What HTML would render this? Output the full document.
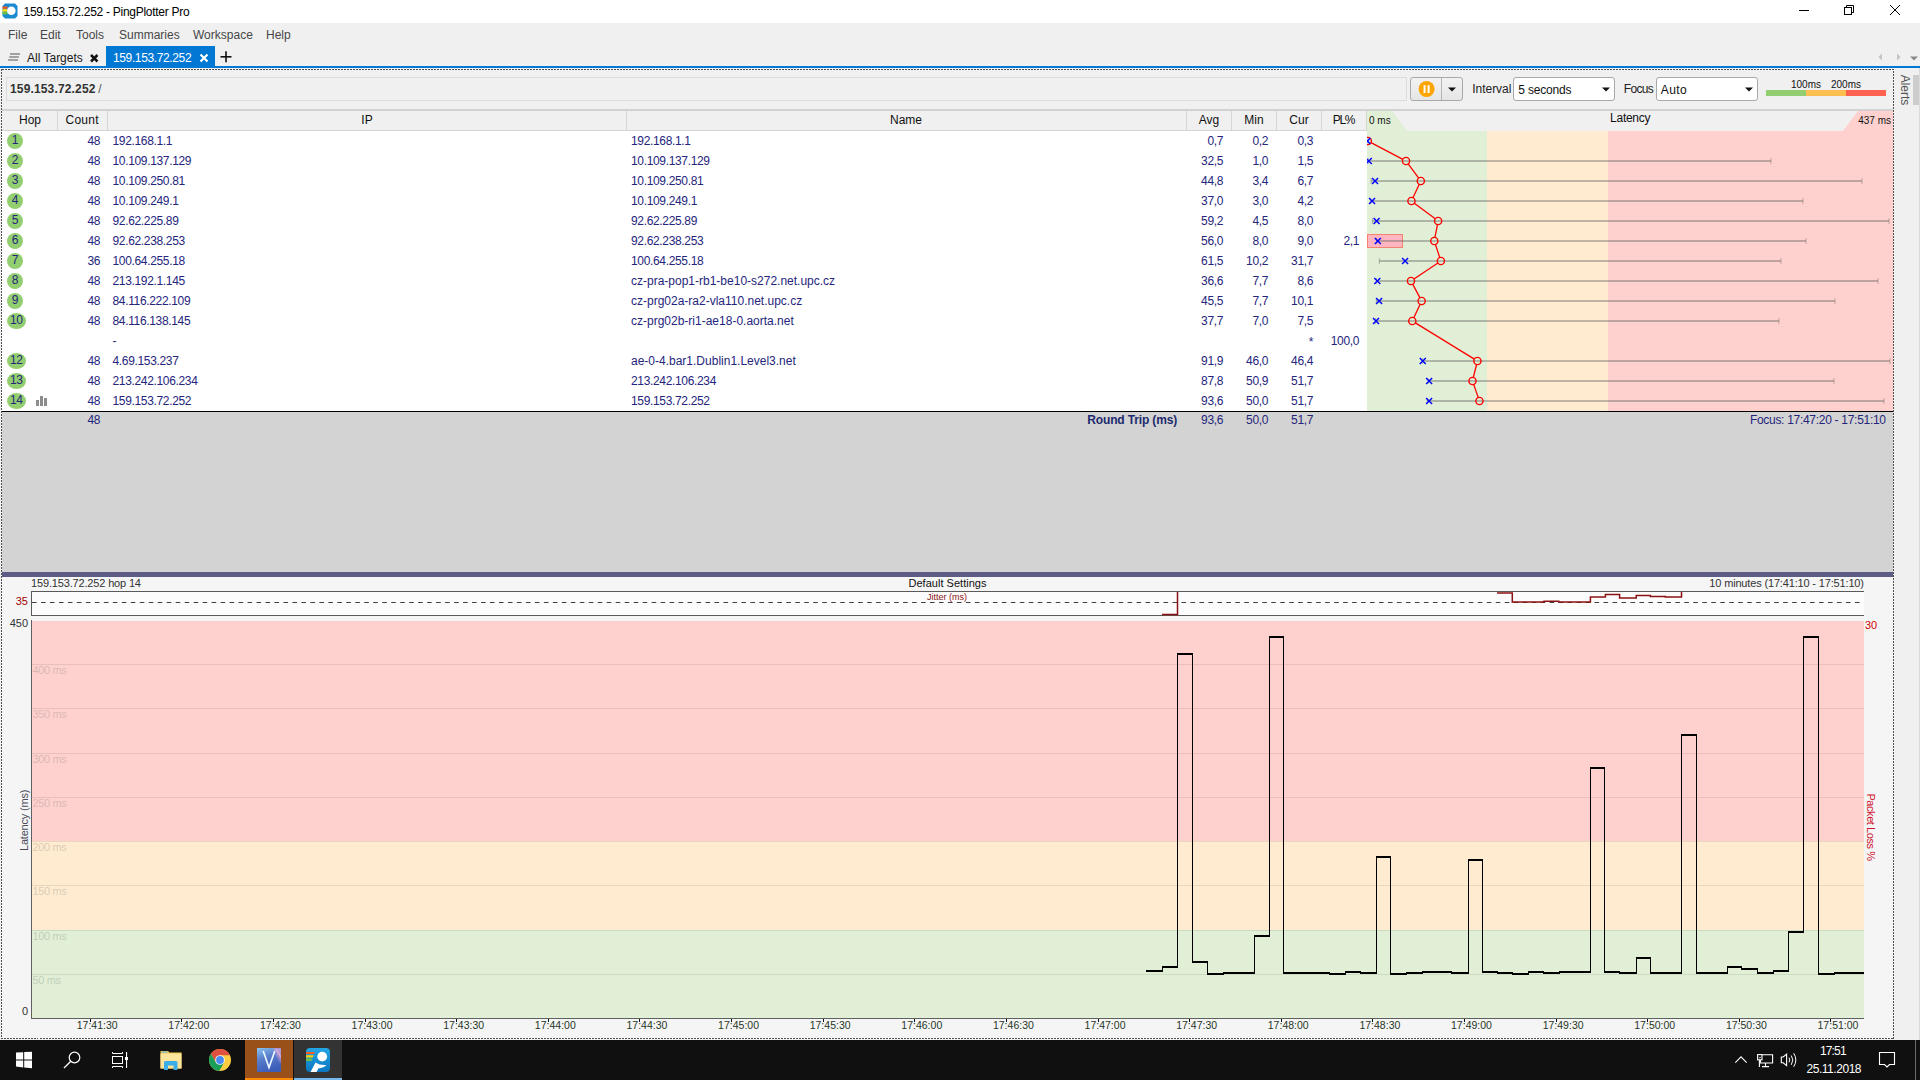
<!DOCTYPE html><html><head><meta charset="utf-8"><style>
html,body{margin:0;padding:0;}
body{width:1920px;height:1080px;overflow:hidden;position:relative;background:#f0f0f0;font-family:"Liberation Sans",sans-serif;}
.t{position:absolute;white-space:nowrap;}
.r{position:absolute;}
svg{position:absolute;}
</style></head><body>
<div class="r" style="left:0px;top:0px;width:1920px;height:23px;background:#ffffff;"></div>
<svg style="left:2px;top:3px" width="16" height="16" viewBox="0 0 16 16">
<path d="M3 0.5H13L15.5 3V13L13 15.5H3L0.5 13V3Z" fill="#1a8bd0"/>
<rect x="0.5" y="3.5" width="5" height="2.2" fill="#ff5a1f"/>
<rect x="0.5" y="6.2" width="4.5" height="2.4" fill="#ffe000"/>
<rect x="0.5" y="9" width="5" height="2.4" fill="#6cc04a"/>
<circle cx="9.3" cy="7.8" r="4.3" fill="#fff"/>
</svg>
<div class="t" style="top:3.50px;height:16px;line-height:16px;font-size:12px;color:#000;letter-spacing:-0.281px;left:23.50px;">159.153.72.252 - PingPlotter Pro</div>
<div class="r" style="left:1799px;top:10px;width:10px;height:1px;background:#000;"></div>
<svg style="left:1840px;top:2px" width="20" height="18" viewBox="0 0 20 18">
<rect x="4.5" y="5.5" width="7" height="7" fill="none" stroke="#000" stroke-width="1"/>
<path d="M6.5 5.5V3.5H13.5V10.5H11.5" fill="none" stroke="#000" stroke-width="1"/>
</svg>
<svg style="left:1885px;top:0px" width="20" height="20" viewBox="0 0 20 20">
<path d="M5 5L15 15M15 5L5 15" stroke="#000" stroke-width="1"/>
</svg>
<div class="r" style="left:0px;top:23px;width:1920px;height:23px;background:#f0f0f0;"></div>
<div class="t" style="top:26.50px;height:16px;line-height:16px;font-size:12px;color:#474747;left:8.00px;">File</div>
<div class="t" style="top:26.50px;height:16px;line-height:16px;font-size:12px;color:#474747;left:40.00px;">Edit</div>
<div class="t" style="top:26.50px;height:16px;line-height:16px;font-size:12px;color:#474747;left:76.00px;">Tools</div>
<div class="t" style="top:26.50px;height:16px;line-height:16px;font-size:12px;color:#474747;left:119.00px;">Summaries</div>
<div class="t" style="top:26.50px;height:16px;line-height:16px;font-size:12px;color:#474747;left:193.00px;">Workspace</div>
<div class="t" style="top:26.50px;height:16px;line-height:16px;font-size:12px;color:#474747;left:266.00px;">Help</div>
<svg style="left:6px;top:50px" width="16" height="14" viewBox="0 0 16 14">
<rect x="4" y="3.3" width="10" height="1.4" fill="#808080"/>
<rect x="3.3" y="6.3" width="9.5" height="1.4" fill="#808080"/>
<rect x="2.1" y="9.3" width="10" height="1.4" fill="#808080"/>
</svg>
<div class="t" style="top:50.00px;height:16px;line-height:16px;font-size:12px;color:#1a1a1a;left:27.00px;">All Targets</div>
<svg style="left:88px;top:52px" width="12" height="12" viewBox="0 0 12 12">
<path d="M3 3L9.5 9.5M9.5 3L3 9.5" stroke="#111" stroke-width="2.5"/>
</svg>
<div class="r" style="left:106px;top:46px;width:109px;height:20px;background:#0078d4;"></div>
<div class="t" style="top:49.50px;height:16px;line-height:16px;font-size:12px;color:#ffffff;letter-spacing:-0.372px;left:113.00px;">159.153.72.252</div>
<svg style="left:197.5px;top:52px" width="12" height="12" viewBox="0 0 12 12">
<path d="M2.5 2.5L9.5 9.5M9.5 2.5L2.5 9.5" stroke="#fff" stroke-width="2.2"/>
</svg>
<svg style="left:219px;top:50px" width="14" height="14" viewBox="0 0 14 14">
<rect x="1.5" y="6" width="11" height="1.6" fill="#111"/><rect x="6.2" y="1.3" width="1.6" height="11" fill="#111"/>
</svg>
<svg style="left:1875.5px;top:50px" width="46" height="14" viewBox="0 0 46 14">
<path d="M6 3.5L2.5 7L6 10.5Z" fill="#c3c3c3"/>
<path d="M21 3.5L24.5 7L21 10.5Z" fill="#c3c3c3"/>
<path d="M34 6.5H42L38 10.5Z" fill="#8a8a8a"/>
</svg>
<div class="r" style="left:0px;top:66px;width:1920px;height:2px;background:#0078d4;"></div>
<div class="r" style="left:0px;top:68px;width:1920px;height:972px;background:#f0f0f0;"></div>
<div class="r" style="left:6px;top:77px;width:1401px;height:24px;background:#f0f0f0;box-sizing:border-box;border:1px solid #dcdcdc;"></div>
<div class="t" style="top:80.50px;height:16px;line-height:16px;font-size:12px;color:#333;font-weight:bold;letter-spacing:0.151px;left:10.00px;">159.153.72.252</div>
<div class="t" style="top:80.50px;height:16px;line-height:16px;font-size:12px;color:#555;left:98.30px;">/</div>
<div class="r" style="left:1410px;top:77px;width:53px;height:24px;box-sizing:border-box;border:1px solid #a9a9a9;border-radius:3px;background:linear-gradient(#f2f2f2,#e6e6e6);"></div>
<div class="r" style="left:1441px;top:78px;width:1px;height:22px;background:#b5b5b5;"></div>
<svg style="left:1417px;top:80px" width="20" height="18" viewBox="0 0 20 18">
<circle cx="9.6" cy="9" r="8" fill="#ffa500"/>
<rect x="6.6" y="5.2" width="2" height="7.8" fill="#fff"/>
<rect x="10.6" y="5.2" width="2" height="7.8" fill="#fff"/>
</svg>
<svg style="left:1446px;top:85.5px" width="12" height="8" viewBox="0 0 12 8">
<path d="M2 1.5H10L6 5.5Z" fill="#111"/></svg>
<div class="t" style="top:80.50px;height:16px;line-height:16px;font-size:12px;color:#222;letter-spacing:-0.040px;left:1472.30px;">Interval</div>
<div class="r" style="left:1513px;top:77px;width:102px;height:24px;box-sizing:border-box;border:1px solid #a9a9a9;border-radius:3px;background:#fff;"></div>
<div class="t" style="top:81.50px;height:16px;line-height:16px;font-size:12px;color:#111;letter-spacing:-0.203px;left:1518.30px;">5 seconds</div>
<svg style="left:1600px;top:85.5px" width="12" height="8" viewBox="0 0 12 8">
<path d="M2 1.5H10L6 5.5Z" fill="#111"/></svg>
<div class="t" style="top:80.50px;height:16px;line-height:16px;font-size:12px;color:#222;letter-spacing:-0.652px;left:1623.75px;">Focus</div>
<div class="r" style="left:1656px;top:77px;width:102px;height:24px;box-sizing:border-box;border:1px solid #a9a9a9;border-radius:3px;background:#fff;"></div>
<div class="t" style="top:81.50px;height:16px;line-height:16px;font-size:12px;color:#111;letter-spacing:0.464px;left:1660.70px;">Auto</div>
<svg style="left:1743px;top:85.5px" width="12" height="8" viewBox="0 0 12 8">
<path d="M2 1.5H10L6 5.5Z" fill="#111"/></svg>
<div class="r" style="left:1766px;top:90px;width:40px;height:6px;background:#93cd72;"></div>
<div class="r" style="left:1806px;top:90px;width:40px;height:6px;background:#ffbe50;"></div>
<div class="r" style="left:1846px;top:90px;width:40px;height:6px;background:#ff6150;"></div>
<div class="t" style="top:77.50px;height:14px;line-height:14px;font-size:10px;color:#111;left:1206.00px;width:1200px;text-align:center;">100ms</div>
<div class="t" style="top:77.50px;height:14px;line-height:14px;font-size:10px;color:#111;left:1246.00px;width:1200px;text-align:center;">200ms</div>
<div class="t" style="left:1889px;top:83px;width:32px;height:14px;line-height:14px;font-size:12px;color:#555;transform:rotate(90deg);text-align:center;">Alerts</div>
<div class="r" style="left:1913px;top:75px;width:7px;height:30px;background:#cdcdcd;"></div>
<div class="r" style="left:1919px;top:68px;width:1px;height:972px;background:#dadada;"></div>
<div class="r" style="left:2px;top:109px;width:1891px;height:2px;background:#d2d2d2;"></div>
<div class="r" style="left:2px;top:111px;width:1891px;height:19px;background:#f0f0f0;"></div>
<div class="r" style="left:2px;top:130px;width:1365px;height:1px;background:#d4d4d4;"></div>
<div class="r" style="left:57px;top:111px;width:1px;height:19px;background:#d6d6d6;"></div>
<div class="r" style="left:107px;top:111px;width:1px;height:19px;background:#d6d6d6;"></div>
<div class="r" style="left:626px;top:111px;width:1px;height:19px;background:#d6d6d6;"></div>
<div class="r" style="left:1186px;top:111px;width:1px;height:19px;background:#d6d6d6;"></div>
<div class="r" style="left:1231px;top:111px;width:1px;height:19px;background:#d6d6d6;"></div>
<div class="r" style="left:1276px;top:111px;width:1px;height:19px;background:#d6d6d6;"></div>
<div class="r" style="left:1321px;top:111px;width:1px;height:19px;background:#d6d6d6;"></div>
<div class="r" style="left:1366px;top:111px;width:1px;height:19px;background:#d6d6d6;"></div>
<div class="t" style="top:111.50px;height:16px;line-height:16px;font-size:12px;color:#111;left:-570.00px;width:1200px;text-align:center;">Hop</div>
<div class="t" style="top:111.50px;height:16px;line-height:16px;font-size:12px;color:#111;letter-spacing:0.262px;left:-517.87px;width:1200px;text-align:center;">Count</div>
<div class="t" style="top:111.50px;height:16px;line-height:16px;font-size:12px;color:#111;left:-233.00px;width:1200px;text-align:center;">IP</div>
<div class="t" style="top:111.50px;height:16px;line-height:16px;font-size:12px;color:#111;left:306.00px;width:1200px;text-align:center;">Name</div>
<div class="t" style="top:111.50px;height:16px;line-height:16px;font-size:12px;color:#111;left:609.00px;width:1200px;text-align:center;">Avg</div>
<div class="t" style="top:111.50px;height:16px;line-height:16px;font-size:12px;color:#111;left:654.00px;width:1200px;text-align:center;">Min</div>
<div class="t" style="top:111.50px;height:16px;line-height:16px;font-size:12px;color:#111;left:699.00px;width:1200px;text-align:center;">Cur</div>
<div class="t" style="top:111.50px;height:16px;line-height:16px;font-size:12px;color:#111;letter-spacing:-1.340px;left:743.53px;width:1200px;text-align:center;">PL%</div>
<div class="r" style="left:2px;top:131px;width:1365px;height:280px;background:#ffffff;"></div>
<svg style="left:0;top:0" width="60" height="420"><ellipse cx="15" cy="141" rx="8" ry="8" fill="#93cf70"/><ellipse cx="15" cy="161" rx="8" ry="8" fill="#93cf70"/><ellipse cx="15" cy="181" rx="8" ry="8" fill="#93cf70"/><ellipse cx="15" cy="201" rx="8" ry="8" fill="#93cf70"/><ellipse cx="15" cy="221" rx="8" ry="8" fill="#93cf70"/><ellipse cx="15" cy="241" rx="8" ry="8" fill="#93cf70"/><ellipse cx="15" cy="261" rx="8" ry="8" fill="#93cf70"/><ellipse cx="15" cy="281" rx="8" ry="8" fill="#93cf70"/><ellipse cx="15" cy="301" rx="8" ry="8" fill="#93cf70"/><ellipse cx="16.5" cy="321" rx="9.5" ry="8" fill="#93cf70"/><ellipse cx="16.5" cy="361" rx="9.5" ry="8" fill="#93cf70"/><ellipse cx="16.5" cy="381" rx="9.5" ry="8" fill="#93cf70"/><ellipse cx="16.5" cy="401" rx="9.5" ry="8" fill="#93cf70"/><rect x="36" y="400" width="3" height="6" fill="#8c8c8c"/><rect x="40" y="396" width="3" height="10" fill="#8c8c8c"/><rect x="44" y="398" width="3" height="8" fill="#8c8c8c"/></svg>
<div class="t" style="top:131.80px;height:16px;line-height:16px;font-size:12px;color:#25257c;left:-585.00px;width:1200px;text-align:center;">1</div>
<div class="t" style="top:132.50px;height:16px;line-height:16px;font-size:12px;color:#25257c;letter-spacing:-0.300px;left:-499.80px;width:600px;text-align:right;">48</div>
<div class="t" style="top:132.50px;height:16px;line-height:16px;font-size:12px;color:#25257c;letter-spacing:-0.340px;left:112.50px;">192.168.1.1</div>
<div class="t" style="top:132.50px;height:16px;line-height:16px;font-size:12px;color:#25257c;letter-spacing:-0.340px;left:631.00px;">192.168.1.1</div>
<div class="t" style="top:132.50px;height:16px;line-height:16px;font-size:12px;color:#25257c;letter-spacing:-0.300px;left:623.20px;width:600px;text-align:right;">0,7</div>
<div class="t" style="top:132.50px;height:16px;line-height:16px;font-size:12px;color:#25257c;letter-spacing:-0.300px;left:668.20px;width:600px;text-align:right;">0,2</div>
<div class="t" style="top:132.50px;height:16px;line-height:16px;font-size:12px;color:#25257c;letter-spacing:-0.300px;left:713.20px;width:600px;text-align:right;">0,3</div>
<div class="t" style="top:151.80px;height:16px;line-height:16px;font-size:12px;color:#25257c;left:-585.00px;width:1200px;text-align:center;">2</div>
<div class="t" style="top:152.50px;height:16px;line-height:16px;font-size:12px;color:#25257c;letter-spacing:-0.300px;left:-499.80px;width:600px;text-align:right;">48</div>
<div class="t" style="top:152.50px;height:16px;line-height:16px;font-size:12px;color:#25257c;letter-spacing:-0.340px;left:112.50px;">10.109.137.129</div>
<div class="t" style="top:152.50px;height:16px;line-height:16px;font-size:12px;color:#25257c;letter-spacing:-0.340px;left:631.00px;">10.109.137.129</div>
<div class="t" style="top:152.50px;height:16px;line-height:16px;font-size:12px;color:#25257c;letter-spacing:-0.300px;left:623.20px;width:600px;text-align:right;">32,5</div>
<div class="t" style="top:152.50px;height:16px;line-height:16px;font-size:12px;color:#25257c;letter-spacing:-0.300px;left:668.20px;width:600px;text-align:right;">1,0</div>
<div class="t" style="top:152.50px;height:16px;line-height:16px;font-size:12px;color:#25257c;letter-spacing:-0.300px;left:713.20px;width:600px;text-align:right;">1,5</div>
<div class="t" style="top:171.80px;height:16px;line-height:16px;font-size:12px;color:#25257c;left:-585.00px;width:1200px;text-align:center;">3</div>
<div class="t" style="top:172.50px;height:16px;line-height:16px;font-size:12px;color:#25257c;letter-spacing:-0.300px;left:-499.80px;width:600px;text-align:right;">48</div>
<div class="t" style="top:172.50px;height:16px;line-height:16px;font-size:12px;color:#25257c;letter-spacing:-0.340px;left:112.50px;">10.109.250.81</div>
<div class="t" style="top:172.50px;height:16px;line-height:16px;font-size:12px;color:#25257c;letter-spacing:-0.340px;left:631.00px;">10.109.250.81</div>
<div class="t" style="top:172.50px;height:16px;line-height:16px;font-size:12px;color:#25257c;letter-spacing:-0.300px;left:623.20px;width:600px;text-align:right;">44,8</div>
<div class="t" style="top:172.50px;height:16px;line-height:16px;font-size:12px;color:#25257c;letter-spacing:-0.300px;left:668.20px;width:600px;text-align:right;">3,4</div>
<div class="t" style="top:172.50px;height:16px;line-height:16px;font-size:12px;color:#25257c;letter-spacing:-0.300px;left:713.20px;width:600px;text-align:right;">6,7</div>
<div class="t" style="top:191.80px;height:16px;line-height:16px;font-size:12px;color:#25257c;left:-585.00px;width:1200px;text-align:center;">4</div>
<div class="t" style="top:192.50px;height:16px;line-height:16px;font-size:12px;color:#25257c;letter-spacing:-0.300px;left:-499.80px;width:600px;text-align:right;">48</div>
<div class="t" style="top:192.50px;height:16px;line-height:16px;font-size:12px;color:#25257c;letter-spacing:-0.340px;left:112.50px;">10.109.249.1</div>
<div class="t" style="top:192.50px;height:16px;line-height:16px;font-size:12px;color:#25257c;letter-spacing:-0.340px;left:631.00px;">10.109.249.1</div>
<div class="t" style="top:192.50px;height:16px;line-height:16px;font-size:12px;color:#25257c;letter-spacing:-0.300px;left:623.20px;width:600px;text-align:right;">37,0</div>
<div class="t" style="top:192.50px;height:16px;line-height:16px;font-size:12px;color:#25257c;letter-spacing:-0.300px;left:668.20px;width:600px;text-align:right;">3,0</div>
<div class="t" style="top:192.50px;height:16px;line-height:16px;font-size:12px;color:#25257c;letter-spacing:-0.300px;left:713.20px;width:600px;text-align:right;">4,2</div>
<div class="t" style="top:211.80px;height:16px;line-height:16px;font-size:12px;color:#25257c;left:-585.00px;width:1200px;text-align:center;">5</div>
<div class="t" style="top:212.50px;height:16px;line-height:16px;font-size:12px;color:#25257c;letter-spacing:-0.300px;left:-499.80px;width:600px;text-align:right;">48</div>
<div class="t" style="top:212.50px;height:16px;line-height:16px;font-size:12px;color:#25257c;letter-spacing:-0.340px;left:112.50px;">92.62.225.89</div>
<div class="t" style="top:212.50px;height:16px;line-height:16px;font-size:12px;color:#25257c;letter-spacing:-0.340px;left:631.00px;">92.62.225.89</div>
<div class="t" style="top:212.50px;height:16px;line-height:16px;font-size:12px;color:#25257c;letter-spacing:-0.300px;left:623.20px;width:600px;text-align:right;">59,2</div>
<div class="t" style="top:212.50px;height:16px;line-height:16px;font-size:12px;color:#25257c;letter-spacing:-0.300px;left:668.20px;width:600px;text-align:right;">4,5</div>
<div class="t" style="top:212.50px;height:16px;line-height:16px;font-size:12px;color:#25257c;letter-spacing:-0.300px;left:713.20px;width:600px;text-align:right;">8,0</div>
<div class="t" style="top:231.80px;height:16px;line-height:16px;font-size:12px;color:#25257c;left:-585.00px;width:1200px;text-align:center;">6</div>
<div class="t" style="top:232.50px;height:16px;line-height:16px;font-size:12px;color:#25257c;letter-spacing:-0.300px;left:-499.80px;width:600px;text-align:right;">48</div>
<div class="t" style="top:232.50px;height:16px;line-height:16px;font-size:12px;color:#25257c;letter-spacing:-0.340px;left:112.50px;">92.62.238.253</div>
<div class="t" style="top:232.50px;height:16px;line-height:16px;font-size:12px;color:#25257c;letter-spacing:-0.340px;left:631.00px;">92.62.238.253</div>
<div class="t" style="top:232.50px;height:16px;line-height:16px;font-size:12px;color:#25257c;letter-spacing:-0.300px;left:623.20px;width:600px;text-align:right;">56,0</div>
<div class="t" style="top:232.50px;height:16px;line-height:16px;font-size:12px;color:#25257c;letter-spacing:-0.300px;left:668.20px;width:600px;text-align:right;">8,0</div>
<div class="t" style="top:232.50px;height:16px;line-height:16px;font-size:12px;color:#25257c;letter-spacing:-0.300px;left:713.20px;width:600px;text-align:right;">9,0</div>
<div class="t" style="top:232.50px;height:16px;line-height:16px;font-size:12px;color:#25257c;letter-spacing:-0.300px;left:759.20px;width:600px;text-align:right;">2,1</div>
<div class="t" style="top:251.80px;height:16px;line-height:16px;font-size:12px;color:#25257c;left:-585.00px;width:1200px;text-align:center;">7</div>
<div class="t" style="top:252.50px;height:16px;line-height:16px;font-size:12px;color:#25257c;letter-spacing:-0.300px;left:-499.80px;width:600px;text-align:right;">36</div>
<div class="t" style="top:252.50px;height:16px;line-height:16px;font-size:12px;color:#25257c;letter-spacing:-0.340px;left:112.50px;">100.64.255.18</div>
<div class="t" style="top:252.50px;height:16px;line-height:16px;font-size:12px;color:#25257c;letter-spacing:-0.340px;left:631.00px;">100.64.255.18</div>
<div class="t" style="top:252.50px;height:16px;line-height:16px;font-size:12px;color:#25257c;letter-spacing:-0.300px;left:623.20px;width:600px;text-align:right;">61,5</div>
<div class="t" style="top:252.50px;height:16px;line-height:16px;font-size:12px;color:#25257c;letter-spacing:-0.300px;left:668.20px;width:600px;text-align:right;">10,2</div>
<div class="t" style="top:252.50px;height:16px;line-height:16px;font-size:12px;color:#25257c;letter-spacing:-0.300px;left:713.20px;width:600px;text-align:right;">31,7</div>
<div class="t" style="top:271.80px;height:16px;line-height:16px;font-size:12px;color:#25257c;left:-585.00px;width:1200px;text-align:center;">8</div>
<div class="t" style="top:272.50px;height:16px;line-height:16px;font-size:12px;color:#25257c;letter-spacing:-0.300px;left:-499.80px;width:600px;text-align:right;">48</div>
<div class="t" style="top:272.50px;height:16px;line-height:16px;font-size:12px;color:#25257c;letter-spacing:-0.340px;left:112.50px;">213.192.1.145</div>
<div class="t" style="top:272.50px;height:16px;line-height:16px;font-size:12px;color:#25257c;left:631.00px;">cz-pra-pop1-rb1-be10-s272.net.upc.cz</div>
<div class="t" style="top:272.50px;height:16px;line-height:16px;font-size:12px;color:#25257c;letter-spacing:-0.300px;left:623.20px;width:600px;text-align:right;">36,6</div>
<div class="t" style="top:272.50px;height:16px;line-height:16px;font-size:12px;color:#25257c;letter-spacing:-0.300px;left:668.20px;width:600px;text-align:right;">7,7</div>
<div class="t" style="top:272.50px;height:16px;line-height:16px;font-size:12px;color:#25257c;letter-spacing:-0.300px;left:713.20px;width:600px;text-align:right;">8,6</div>
<div class="t" style="top:291.80px;height:16px;line-height:16px;font-size:12px;color:#25257c;left:-585.00px;width:1200px;text-align:center;">9</div>
<div class="t" style="top:292.50px;height:16px;line-height:16px;font-size:12px;color:#25257c;letter-spacing:-0.300px;left:-499.80px;width:600px;text-align:right;">48</div>
<div class="t" style="top:292.50px;height:16px;line-height:16px;font-size:12px;color:#25257c;letter-spacing:-0.340px;left:112.50px;">84.116.222.109</div>
<div class="t" style="top:292.50px;height:16px;line-height:16px;font-size:12px;color:#25257c;left:631.00px;">cz-prg02a-ra2-vla110.net.upc.cz</div>
<div class="t" style="top:292.50px;height:16px;line-height:16px;font-size:12px;color:#25257c;letter-spacing:-0.300px;left:623.20px;width:600px;text-align:right;">45,5</div>
<div class="t" style="top:292.50px;height:16px;line-height:16px;font-size:12px;color:#25257c;letter-spacing:-0.300px;left:668.20px;width:600px;text-align:right;">7,7</div>
<div class="t" style="top:292.50px;height:16px;line-height:16px;font-size:12px;color:#25257c;letter-spacing:-0.300px;left:713.20px;width:600px;text-align:right;">10,1</div>
<div class="t" style="top:311.80px;height:16px;line-height:16px;font-size:12px;color:#25257c;letter-spacing:-0.400px;left:-583.70px;width:1200px;text-align:center;">10</div>
<div class="t" style="top:312.50px;height:16px;line-height:16px;font-size:12px;color:#25257c;letter-spacing:-0.300px;left:-499.80px;width:600px;text-align:right;">48</div>
<div class="t" style="top:312.50px;height:16px;line-height:16px;font-size:12px;color:#25257c;letter-spacing:-0.340px;left:112.50px;">84.116.138.145</div>
<div class="t" style="top:312.50px;height:16px;line-height:16px;font-size:12px;color:#25257c;left:631.00px;">cz-prg02b-ri1-ae18-0.aorta.net</div>
<div class="t" style="top:312.50px;height:16px;line-height:16px;font-size:12px;color:#25257c;letter-spacing:-0.300px;left:623.20px;width:600px;text-align:right;">37,7</div>
<div class="t" style="top:312.50px;height:16px;line-height:16px;font-size:12px;color:#25257c;letter-spacing:-0.300px;left:668.20px;width:600px;text-align:right;">7,0</div>
<div class="t" style="top:312.50px;height:16px;line-height:16px;font-size:12px;color:#25257c;letter-spacing:-0.300px;left:713.20px;width:600px;text-align:right;">7,5</div>
<div class="t" style="top:332.50px;height:16px;line-height:16px;font-size:12px;color:#25257c;letter-spacing:-0.340px;left:112.50px;">-</div>
<div class="t" style="top:333.50px;height:16px;line-height:16px;font-size:12px;color:#25257c;letter-spacing:-0.300px;left:713.20px;width:600px;text-align:right;">*</div>
<div class="t" style="top:332.50px;height:16px;line-height:16px;font-size:12px;color:#25257c;letter-spacing:-0.300px;left:759.20px;width:600px;text-align:right;">100,0</div>
<div class="t" style="top:351.80px;height:16px;line-height:16px;font-size:12px;color:#25257c;letter-spacing:-0.400px;left:-583.70px;width:1200px;text-align:center;">12</div>
<div class="t" style="top:352.50px;height:16px;line-height:16px;font-size:12px;color:#25257c;letter-spacing:-0.300px;left:-499.80px;width:600px;text-align:right;">48</div>
<div class="t" style="top:352.50px;height:16px;line-height:16px;font-size:12px;color:#25257c;letter-spacing:-0.340px;left:112.50px;">4.69.153.237</div>
<div class="t" style="top:352.50px;height:16px;line-height:16px;font-size:12px;color:#25257c;left:631.00px;">ae-0-4.bar1.Dublin1.Level3.net</div>
<div class="t" style="top:352.50px;height:16px;line-height:16px;font-size:12px;color:#25257c;letter-spacing:-0.300px;left:623.20px;width:600px;text-align:right;">91,9</div>
<div class="t" style="top:352.50px;height:16px;line-height:16px;font-size:12px;color:#25257c;letter-spacing:-0.300px;left:668.20px;width:600px;text-align:right;">46,0</div>
<div class="t" style="top:352.50px;height:16px;line-height:16px;font-size:12px;color:#25257c;letter-spacing:-0.300px;left:713.20px;width:600px;text-align:right;">46,4</div>
<div class="t" style="top:371.80px;height:16px;line-height:16px;font-size:12px;color:#25257c;letter-spacing:-0.400px;left:-583.70px;width:1200px;text-align:center;">13</div>
<div class="t" style="top:372.50px;height:16px;line-height:16px;font-size:12px;color:#25257c;letter-spacing:-0.300px;left:-499.80px;width:600px;text-align:right;">48</div>
<div class="t" style="top:372.50px;height:16px;line-height:16px;font-size:12px;color:#25257c;letter-spacing:-0.340px;left:112.50px;">213.242.106.234</div>
<div class="t" style="top:372.50px;height:16px;line-height:16px;font-size:12px;color:#25257c;letter-spacing:-0.340px;left:631.00px;">213.242.106.234</div>
<div class="t" style="top:372.50px;height:16px;line-height:16px;font-size:12px;color:#25257c;letter-spacing:-0.300px;left:623.20px;width:600px;text-align:right;">87,8</div>
<div class="t" style="top:372.50px;height:16px;line-height:16px;font-size:12px;color:#25257c;letter-spacing:-0.300px;left:668.20px;width:600px;text-align:right;">50,9</div>
<div class="t" style="top:372.50px;height:16px;line-height:16px;font-size:12px;color:#25257c;letter-spacing:-0.300px;left:713.20px;width:600px;text-align:right;">51,7</div>
<div class="t" style="top:391.80px;height:16px;line-height:16px;font-size:12px;color:#25257c;letter-spacing:-0.400px;left:-583.70px;width:1200px;text-align:center;">14</div>
<div class="t" style="top:392.50px;height:16px;line-height:16px;font-size:12px;color:#25257c;letter-spacing:-0.300px;left:-499.80px;width:600px;text-align:right;">48</div>
<div class="t" style="top:392.50px;height:16px;line-height:16px;font-size:12px;color:#25257c;letter-spacing:-0.340px;left:112.50px;">159.153.72.252</div>
<div class="t" style="top:392.50px;height:16px;line-height:16px;font-size:12px;color:#25257c;letter-spacing:-0.340px;left:631.00px;">159.153.72.252</div>
<div class="t" style="top:392.50px;height:16px;line-height:16px;font-size:12px;color:#25257c;letter-spacing:-0.300px;left:623.20px;width:600px;text-align:right;">93,6</div>
<div class="t" style="top:392.50px;height:16px;line-height:16px;font-size:12px;color:#25257c;letter-spacing:-0.300px;left:668.20px;width:600px;text-align:right;">50,0</div>
<div class="t" style="top:392.50px;height:16px;line-height:16px;font-size:12px;color:#25257c;letter-spacing:-0.300px;left:713.20px;width:600px;text-align:right;">51,7</div>
<svg style="left:0;top:0" width="1920" height="420" viewBox="0 0 1920 420"><defs><clipPath id="lc"><rect x="1367" y="0" width="526" height="411"/></clipPath></defs><g clip-path="url(#lc)"><polygon points="1367,111 1392,111 1407,131 1367,131" fill="#e0efd6"/><polygon points="1858,111 1893,111 1893,131 1843,131" fill="#ffd1ce"/><rect x="1367" y="131" width="120" height="280" fill="#e0efd6"/><rect x="1487" y="131" width="121" height="280" fill="#ffebd0"/><rect x="1608" y="131" width="285" height="280" fill="#ffd1ce"/><rect x="1367.5" y="234.5" width="35" height="13" fill="#ffb6c1" stroke="#f4846f" stroke-width="1"/><rect x="1368.2" y="160" width="402.8" height="2" fill="rgba(95,95,95,0.40)"/><rect x="1367.7" y="158" width="1" height="6" fill="rgba(95,95,95,0.40)"/><rect x="1770.5" y="158" width="1" height="6" fill="rgba(95,95,95,0.40)"/><rect x="1371.1" y="180" width="490.9" height="2" fill="rgba(95,95,95,0.40)"/><rect x="1370.6" y="178" width="1" height="6" fill="rgba(95,95,95,0.40)"/><rect x="1861.5" y="178" width="1" height="6" fill="rgba(95,95,95,0.40)"/><rect x="1370.6" y="200" width="432.4" height="2" fill="rgba(95,95,95,0.40)"/><rect x="1370.1" y="198" width="1" height="6" fill="rgba(95,95,95,0.40)"/><rect x="1802.5" y="198" width="1" height="6" fill="rgba(95,95,95,0.40)"/><rect x="1372.4" y="220" width="516.6" height="2" fill="rgba(95,95,95,0.40)"/><rect x="1371.9" y="218" width="1" height="6" fill="rgba(95,95,95,0.40)"/><rect x="1888.5" y="218" width="1" height="6" fill="rgba(95,95,95,0.40)"/><rect x="1376.6" y="240" width="429.4" height="2" fill="rgba(95,95,95,0.40)"/><rect x="1376.1" y="238" width="1" height="6" fill="rgba(95,95,95,0.40)"/><rect x="1805.5" y="238" width="1" height="6" fill="rgba(95,95,95,0.40)"/><rect x="1379.3" y="260" width="401.7" height="2" fill="rgba(95,95,95,0.40)"/><rect x="1378.8" y="258" width="1" height="6" fill="rgba(95,95,95,0.40)"/><rect x="1780.5" y="258" width="1" height="6" fill="rgba(95,95,95,0.40)"/><rect x="1376.3" y="280" width="501.7" height="2" fill="rgba(95,95,95,0.40)"/><rect x="1375.8" y="278" width="1" height="6" fill="rgba(95,95,95,0.40)"/><rect x="1877.5" y="278" width="1" height="6" fill="rgba(95,95,95,0.40)"/><rect x="1376.3" y="300" width="458.7" height="2" fill="rgba(95,95,95,0.40)"/><rect x="1375.8" y="298" width="1" height="6" fill="rgba(95,95,95,0.40)"/><rect x="1834.5" y="298" width="1" height="6" fill="rgba(95,95,95,0.40)"/><rect x="1375.4" y="320" width="403.6" height="2" fill="rgba(95,95,95,0.40)"/><rect x="1374.9" y="318" width="1" height="6" fill="rgba(95,95,95,0.40)"/><rect x="1778.5" y="318" width="1" height="6" fill="rgba(95,95,95,0.40)"/><rect x="1422.3" y="360" width="467.7" height="2" fill="rgba(95,95,95,0.40)"/><rect x="1421.8" y="358" width="1" height="6" fill="rgba(95,95,95,0.40)"/><rect x="1889.5" y="358" width="1" height="6" fill="rgba(95,95,95,0.40)"/><rect x="1428.1" y="380" width="405.9" height="2" fill="rgba(95,95,95,0.40)"/><rect x="1427.6" y="378" width="1" height="6" fill="rgba(95,95,95,0.40)"/><rect x="1833.5" y="378" width="1" height="6" fill="rgba(95,95,95,0.40)"/><rect x="1427.1" y="400" width="456.9" height="2" fill="rgba(95,95,95,0.40)"/><rect x="1426.6" y="398" width="1" height="6" fill="rgba(95,95,95,0.40)"/><rect x="1883.5" y="398" width="1" height="6" fill="rgba(95,95,95,0.40)"/><line x1="1371.03" y1="142.67" x2="1402.86" y2="159.33" stroke="#ff0000" stroke-width="1.3"/><line x1="1408.18" y1="163.90" x2="1418.68" y2="178.10" stroke="#ff0000" stroke-width="1.3"/><line x1="1419.29" y1="184.26" x2="1412.98" y2="197.74" stroke="#ff0000" stroke-width="1.3"/><line x1="1414.33" y1="203.16" x2="1435.24" y2="218.84" stroke="#ff0000" stroke-width="1.3"/><line x1="1437.44" y1="224.54" x2="1434.96" y2="237.46" stroke="#ff0000" stroke-width="1.3"/><line x1="1435.41" y1="244.42" x2="1439.76" y2="257.58" stroke="#ff0000" stroke-width="1.3"/><line x1="1437.89" y1="263.00" x2="1413.96" y2="279.00" stroke="#ff0000" stroke-width="1.3"/><line x1="1412.67" y1="284.17" x2="1419.97" y2="297.83" stroke="#ff0000" stroke-width="1.3"/><line x1="1420.14" y1="304.26" x2="1413.82" y2="317.74" stroke="#ff0000" stroke-width="1.3"/><line x1="1415.36" y1="322.88" x2="1474.34" y2="359.12" stroke="#ff0000" stroke-width="1.3"/><line x1="1476.55" y1="364.50" x2="1473.34" y2="377.50" stroke="#ff0000" stroke-width="1.3"/><line x1="1473.66" y1="384.40" x2="1478.26" y2="397.60" stroke="#ff0000" stroke-width="1.3"/><circle cx="1367.84" cy="141" r="3.6" fill="none" stroke="#ff0000" stroke-width="1.4"/><circle cx="1406.04" cy="161" r="3.6" fill="none" stroke="#ff0000" stroke-width="1.4"/><circle cx="1420.82" cy="181" r="3.6" fill="none" stroke="#ff0000" stroke-width="1.4"/><circle cx="1411.45" cy="201" r="3.6" fill="none" stroke="#ff0000" stroke-width="1.4"/><circle cx="1438.12" cy="221" r="3.6" fill="none" stroke="#ff0000" stroke-width="1.4"/><circle cx="1434.28" cy="241" r="3.6" fill="none" stroke="#ff0000" stroke-width="1.4"/><circle cx="1440.88" cy="261" r="3.6" fill="none" stroke="#ff0000" stroke-width="1.4"/><circle cx="1410.97" cy="281" r="3.6" fill="none" stroke="#ff0000" stroke-width="1.4"/><circle cx="1421.66" cy="301" r="3.6" fill="none" stroke="#ff0000" stroke-width="1.4"/><circle cx="1412.29" cy="321" r="3.6" fill="none" stroke="#ff0000" stroke-width="1.4"/><circle cx="1477.41" cy="361" r="3.6" fill="none" stroke="#ff0000" stroke-width="1.4"/><circle cx="1472.48" cy="381" r="3.6" fill="none" stroke="#ff0000" stroke-width="1.4"/><circle cx="1479.45" cy="401" r="3.6" fill="none" stroke="#ff0000" stroke-width="1.4"/><path d="M1364.36 138L1370.36 144M1370.36 138L1364.36 144" stroke="#0000ff" stroke-width="1.45"/><path d="M1365.80 158L1371.80 164M1371.80 158L1365.80 164" stroke="#0000ff" stroke-width="1.45"/><path d="M1372.05 178L1378.05 184M1378.05 178L1372.05 184" stroke="#0000ff" stroke-width="1.45"/><path d="M1369.05 198L1375.05 204M1375.05 198L1369.05 204" stroke="#0000ff" stroke-width="1.45"/><path d="M1373.61 218L1379.61 224M1379.61 218L1373.61 224" stroke="#0000ff" stroke-width="1.45"/><path d="M1374.81 238L1380.81 244M1380.81 238L1374.81 244" stroke="#0000ff" stroke-width="1.45"/><path d="M1402.08 258L1408.08 264M1408.08 258L1402.08 264" stroke="#0000ff" stroke-width="1.45"/><path d="M1374.33 278L1380.33 284M1380.33 278L1374.33 284" stroke="#0000ff" stroke-width="1.45"/><path d="M1376.13 298L1382.13 304M1382.13 298L1376.13 304" stroke="#0000ff" stroke-width="1.45"/><path d="M1373.01 318L1379.01 324M1379.01 318L1373.01 324" stroke="#0000ff" stroke-width="1.45"/><path d="M1419.74 358L1425.74 364M1425.74 358L1419.74 364" stroke="#0000ff" stroke-width="1.45"/><path d="M1426.11 378L1432.11 384M1432.11 378L1426.11 384" stroke="#0000ff" stroke-width="1.45"/><path d="M1426.11 398L1432.11 404M1432.11 398L1426.11 404" stroke="#0000ff" stroke-width="1.45"/></g></svg>
<div class="t" style="top:113.50px;height:14px;line-height:14px;font-size:10px;color:#111;left:1369.00px;">0 ms</div>
<div class="t" style="top:109.60px;height:16px;line-height:16px;font-size:12px;color:#111;letter-spacing:-0.275px;left:1030.16px;width:1200px;text-align:center;">Latency</div>
<div class="t" style="top:113.50px;height:14px;line-height:14px;font-size:10px;color:#111;left:1291.00px;width:600px;text-align:right;">437 ms</div>
<div class="r" style="left:2px;top:411px;width:1891px;height:1px;background:#000000;"></div>
<div class="r" style="left:2px;top:412px;width:1891px;height:160px;background:#d3d3d3;"></div>
<div class="t" style="top:411.50px;height:16px;line-height:16px;font-size:12px;color:#25257c;letter-spacing:-0.300px;left:-499.80px;width:600px;text-align:right;">48</div>
<div class="t" style="top:411.50px;height:16px;line-height:16px;font-size:12px;color:#1c2a6e;font-weight:bold;letter-spacing:-0.137px;left:577.16px;width:600px;text-align:right;">Round Trip (ms)</div>
<div class="t" style="top:411.50px;height:16px;line-height:16px;font-size:12px;color:#25257c;letter-spacing:-0.300px;left:623.20px;width:600px;text-align:right;">93,6</div>
<div class="t" style="top:411.50px;height:16px;line-height:16px;font-size:12px;color:#25257c;letter-spacing:-0.300px;left:668.20px;width:600px;text-align:right;">50,0</div>
<div class="t" style="top:411.50px;height:16px;line-height:16px;font-size:12px;color:#25257c;letter-spacing:-0.300px;left:713.20px;width:600px;text-align:right;">51,7</div>
<div class="t" style="top:411.50px;height:16px;line-height:16px;font-size:12px;color:#25257c;letter-spacing:-0.294px;left:1285.71px;width:600px;text-align:right;">Focus: 17:47:20 - 17:51:10</div>
<div class="r" style="left:2px;top:572px;width:1891px;height:5px;background:#5c5c86;"></div>
<div class="r" style="left:2px;top:577px;width:1891px;height:461px;background:#f5f5f5;"></div>
<div class="t" style="top:575.50px;height:15px;line-height:15px;font-size:11px;color:#333;letter-spacing:-0.159px;left:31.00px;">159.153.72.252 hop 14</div>
<div class="t" style="top:575.50px;height:15px;line-height:15px;font-size:11px;color:#111;letter-spacing:0.022px;left:347.51px;width:1200px;text-align:center;">Default Settings</div>
<div class="t" style="top:575.50px;height:15px;line-height:15px;font-size:11px;color:#333;letter-spacing:-0.159px;left:1263.84px;width:600px;text-align:right;">10 minutes (17:41:10 - 17:51:10)</div>
<svg style="left:0;top:0" width="1920" height="1040" viewBox="0 0 1920 1040"><rect x="31" y="591" width="1833" height="25" fill="#fcfcfc"/><rect x="31" y="591" width="1833" height="1" fill="#5a5a5a"/><rect x="31" y="615" width="1833" height="1" fill="#5a5a5a"/><rect x="31" y="591" width="1" height="25" fill="#5a5a5a"/><line x1="32" y1="602.5" x2="1863" y2="602.5" stroke="#404040" stroke-width="1.1" stroke-dasharray="4.6,4.38"/><path d="M1162 614.5H1177.5V592M1497 593H1512.3V602H1544V601.25H1558.75V602H1590.4V597H1605.4V594.4H1619.6V598.1H1636.25V595.4H1650.4V596.5H1665.4V597.1H1681.5V592" fill="none" stroke="#8b1010" stroke-width="1.5"/><rect x="32" y="621" width="1832" height="220" fill="#ffd1ce"/><rect x="32" y="841" width="1832" height="89" fill="#ffebd0"/><rect x="32" y="930" width="1832" height="88" fill="#e0efd6"/><rect x="32" y="974" width="1832" height="1" fill="rgba(0,0,0,0.085)"/><rect x="32" y="930" width="1832" height="1" fill="rgba(0,0,0,0.085)"/><rect x="32" y="885" width="1832" height="1" fill="rgba(0,0,0,0.085)"/><rect x="32" y="841" width="1832" height="1" fill="rgba(0,0,0,0.085)"/><rect x="32" y="797" width="1832" height="1" fill="rgba(0,0,0,0.085)"/><rect x="32" y="753" width="1832" height="1" fill="rgba(0,0,0,0.085)"/><rect x="32" y="708" width="1832" height="1" fill="rgba(0,0,0,0.085)"/><rect x="32" y="664" width="1832" height="1" fill="rgba(0,0,0,0.085)"/></svg>
<div class="t" style="top:972.50px;height:15px;line-height:15px;font-size:11px;color:rgba(110,110,110,0.28);letter-spacing:-0.350px;left:32.50px;">50 ms</div>
<div class="t" style="top:928.50px;height:15px;line-height:15px;font-size:11px;color:rgba(110,110,110,0.28);letter-spacing:-0.350px;left:32.50px;">100 ms</div>
<div class="t" style="top:883.50px;height:15px;line-height:15px;font-size:11px;color:rgba(110,110,110,0.28);letter-spacing:-0.350px;left:32.50px;">150 ms</div>
<div class="t" style="top:839.50px;height:15px;line-height:15px;font-size:11px;color:rgba(110,110,110,0.28);letter-spacing:-0.350px;left:32.50px;">200 ms</div>
<div class="t" style="top:795.50px;height:15px;line-height:15px;font-size:11px;color:rgba(110,110,110,0.28);letter-spacing:-0.350px;left:32.50px;">250 ms</div>
<div class="t" style="top:751.50px;height:15px;line-height:15px;font-size:11px;color:rgba(110,110,110,0.28);letter-spacing:-0.350px;left:32.50px;">300 ms</div>
<div class="t" style="top:706.50px;height:15px;line-height:15px;font-size:11px;color:rgba(110,110,110,0.28);letter-spacing:-0.350px;left:32.50px;">350 ms</div>
<div class="t" style="top:662.50px;height:15px;line-height:15px;font-size:11px;color:rgba(110,110,110,0.28);letter-spacing:-0.350px;left:32.50px;">400 ms</div>
<svg style="left:0;top:0" width="1920" height="1040" viewBox="0 0 1920 1040"><rect x="1146" y="970" width="17" height="2" fill="#000"/><rect x="1162" y="966" width="1" height="6" fill="#000"/><rect x="1162" y="966" width="16" height="2" fill="#000"/><rect x="1177" y="653" width="1" height="315" fill="#000"/><rect x="1177" y="653" width="16" height="2" fill="#000"/><rect x="1192" y="653" width="1" height="310" fill="#000"/><rect x="1192" y="961" width="16" height="2" fill="#000"/><rect x="1207" y="961" width="1" height="14" fill="#000"/><rect x="1207" y="973" width="17" height="2" fill="#000"/><rect x="1223" y="972" width="1" height="3" fill="#000"/><rect x="1223" y="972" width="16" height="2" fill="#000"/><rect x="1238" y="972" width="17" height="2" fill="#000"/><rect x="1254" y="935" width="1" height="39" fill="#000"/><rect x="1254" y="935" width="16" height="2" fill="#000"/><rect x="1269" y="636" width="1" height="301" fill="#000"/><rect x="1269" y="636" width="15" height="2" fill="#000"/><rect x="1283" y="636" width="1" height="338" fill="#000"/><rect x="1283" y="972" width="17" height="2" fill="#000"/><rect x="1299" y="972" width="16" height="2" fill="#000"/><rect x="1314" y="972" width="16" height="2" fill="#000"/><rect x="1329" y="972" width="1" height="3" fill="#000"/><rect x="1329" y="973" width="17" height="2" fill="#000"/><rect x="1345" y="971" width="1" height="4" fill="#000"/><rect x="1345" y="971" width="16" height="2" fill="#000"/><rect x="1360" y="971" width="1" height="3" fill="#000"/><rect x="1360" y="972" width="17" height="2" fill="#000"/><rect x="1376" y="856" width="1" height="118" fill="#000"/><rect x="1376" y="856" width="15" height="2" fill="#000"/><rect x="1390" y="856" width="1" height="119" fill="#000"/><rect x="1390" y="973" width="17" height="2" fill="#000"/><rect x="1406" y="972" width="1" height="3" fill="#000"/><rect x="1406" y="972" width="17" height="2" fill="#000"/><rect x="1422" y="971" width="1" height="3" fill="#000"/><rect x="1422" y="971" width="16" height="2" fill="#000"/><rect x="1437" y="971" width="15" height="2" fill="#000"/><rect x="1451" y="971" width="1" height="3" fill="#000"/><rect x="1451" y="972" width="18" height="2" fill="#000"/><rect x="1468" y="859" width="1" height="115" fill="#000"/><rect x="1468" y="859" width="15" height="2" fill="#000"/><rect x="1482" y="859" width="1" height="114" fill="#000"/><rect x="1482" y="971" width="16" height="2" fill="#000"/><rect x="1497" y="971" width="1" height="3" fill="#000"/><rect x="1497" y="972" width="16" height="2" fill="#000"/><rect x="1512" y="972" width="1" height="3" fill="#000"/><rect x="1512" y="973" width="17" height="2" fill="#000"/><rect x="1528" y="971" width="1" height="4" fill="#000"/><rect x="1528" y="971" width="16" height="2" fill="#000"/><rect x="1543" y="971" width="1" height="3" fill="#000"/><rect x="1543" y="972" width="17" height="2" fill="#000"/><rect x="1559" y="971" width="1" height="3" fill="#000"/><rect x="1559" y="971" width="17" height="2" fill="#000"/><rect x="1575" y="971" width="16" height="2" fill="#000"/><rect x="1590" y="767" width="1" height="206" fill="#000"/><rect x="1590" y="767" width="15" height="2" fill="#000"/><rect x="1604" y="767" width="1" height="206" fill="#000"/><rect x="1604" y="971" width="16" height="2" fill="#000"/><rect x="1619" y="971" width="1" height="3" fill="#000"/><rect x="1619" y="972" width="18" height="2" fill="#000"/><rect x="1636" y="957" width="1" height="17" fill="#000"/><rect x="1636" y="957" width="15" height="2" fill="#000"/><rect x="1650" y="957" width="1" height="17" fill="#000"/><rect x="1650" y="972" width="16" height="2" fill="#000"/><rect x="1665" y="972" width="17" height="2" fill="#000"/><rect x="1681" y="734" width="1" height="240" fill="#000"/><rect x="1681" y="734" width="16" height="2" fill="#000"/><rect x="1696" y="734" width="1" height="240" fill="#000"/><rect x="1696" y="972" width="17" height="2" fill="#000"/><rect x="1712" y="972" width="16" height="2" fill="#000"/><rect x="1727" y="966" width="1" height="8" fill="#000"/><rect x="1727" y="966" width="15" height="2" fill="#000"/><rect x="1741" y="966" width="1" height="4" fill="#000"/><rect x="1741" y="968" width="17" height="2" fill="#000"/><rect x="1757" y="968" width="1" height="6" fill="#000"/><rect x="1757" y="972" width="17" height="2" fill="#000"/><rect x="1773" y="970" width="1" height="4" fill="#000"/><rect x="1773" y="970" width="16" height="2" fill="#000"/><rect x="1788" y="931" width="1" height="41" fill="#000"/><rect x="1788" y="931" width="16" height="2" fill="#000"/><rect x="1803" y="636" width="1" height="297" fill="#000"/><rect x="1803" y="636" width="16" height="2" fill="#000"/><rect x="1818" y="636" width="1" height="339" fill="#000"/><rect x="1818" y="973" width="17" height="2" fill="#000"/><rect x="1834" y="972" width="1" height="3" fill="#000"/><rect x="1834" y="972" width="16" height="2" fill="#000"/><rect x="1849" y="972" width="15" height="2" fill="#000"/><rect x="31" y="620" width="1" height="399" fill="#606060"/><rect x="31" y="1018" width="1833" height="1" fill="#606060"/><rect x="90" y="1019" width="1" height="3" fill="#111"/><rect x="181" y="1019" width="1" height="3" fill="#111"/><rect x="273" y="1019" width="1" height="3" fill="#111"/><rect x="365" y="1019" width="1" height="3" fill="#111"/><rect x="456" y="1019" width="1" height="3" fill="#111"/><rect x="548" y="1019" width="1" height="3" fill="#111"/><rect x="639" y="1019" width="1" height="3" fill="#111"/><rect x="731" y="1019" width="1" height="3" fill="#111"/><rect x="823" y="1019" width="1" height="3" fill="#111"/><rect x="914" y="1019" width="1" height="3" fill="#111"/><rect x="1006" y="1019" width="1" height="3" fill="#111"/><rect x="1098" y="1019" width="1" height="3" fill="#111"/><rect x="1189" y="1019" width="1" height="3" fill="#111"/><rect x="1281" y="1019" width="1" height="3" fill="#111"/><rect x="1372" y="1019" width="1" height="3" fill="#111"/><rect x="1464" y="1019" width="1" height="3" fill="#111"/><rect x="1556" y="1019" width="1" height="3" fill="#111"/><rect x="1647" y="1019" width="1" height="3" fill="#111"/><rect x="1739" y="1019" width="1" height="3" fill="#111"/><rect x="1830" y="1019" width="1" height="3" fill="#111"/></svg>
<div class="t" style="top:1018.00px;height:14px;line-height:14px;font-size:10.5px;color:#263626;letter-spacing:0.010px;left:-502.80px;width:1200px;text-align:center;">17:41:30</div>
<div class="t" style="top:1018.00px;height:14px;line-height:14px;font-size:10.5px;color:#263626;letter-spacing:0.010px;left:-411.18px;width:1200px;text-align:center;">17:42:00</div>
<div class="t" style="top:1018.00px;height:14px;line-height:14px;font-size:10.5px;color:#263626;letter-spacing:0.010px;left:-319.56px;width:1200px;text-align:center;">17:42:30</div>
<div class="t" style="top:1018.00px;height:14px;line-height:14px;font-size:10.5px;color:#263626;letter-spacing:0.010px;left:-227.94px;width:1200px;text-align:center;">17:43:00</div>
<div class="t" style="top:1018.00px;height:14px;line-height:14px;font-size:10.5px;color:#263626;letter-spacing:0.010px;left:-136.31px;width:1200px;text-align:center;">17:43:30</div>
<div class="t" style="top:1018.00px;height:14px;line-height:14px;font-size:10.5px;color:#263626;letter-spacing:0.010px;left:-44.69px;width:1200px;text-align:center;">17:44:00</div>
<div class="t" style="top:1018.00px;height:14px;line-height:14px;font-size:10.5px;color:#263626;letter-spacing:0.010px;left:46.93px;width:1200px;text-align:center;">17:44:30</div>
<div class="t" style="top:1018.00px;height:14px;line-height:14px;font-size:10.5px;color:#263626;letter-spacing:0.010px;left:138.55px;width:1200px;text-align:center;">17:45:00</div>
<div class="t" style="top:1018.00px;height:14px;line-height:14px;font-size:10.5px;color:#263626;letter-spacing:0.010px;left:230.17px;width:1200px;text-align:center;">17:45:30</div>
<div class="t" style="top:1018.00px;height:14px;line-height:14px;font-size:10.5px;color:#263626;letter-spacing:0.010px;left:321.79px;width:1200px;text-align:center;">17:46:00</div>
<div class="t" style="top:1018.00px;height:14px;line-height:14px;font-size:10.5px;color:#263626;letter-spacing:0.010px;left:413.41px;width:1200px;text-align:center;">17:46:30</div>
<div class="t" style="top:1018.00px;height:14px;line-height:14px;font-size:10.5px;color:#263626;letter-spacing:0.010px;left:505.02px;width:1200px;text-align:center;">17:47:00</div>
<div class="t" style="top:1018.00px;height:14px;line-height:14px;font-size:10.5px;color:#263626;letter-spacing:0.010px;left:596.65px;width:1200px;text-align:center;">17:47:30</div>
<div class="t" style="top:1018.00px;height:14px;line-height:14px;font-size:10.5px;color:#263626;letter-spacing:0.010px;left:688.26px;width:1200px;text-align:center;">17:48:00</div>
<div class="t" style="top:1018.00px;height:14px;line-height:14px;font-size:10.5px;color:#263626;letter-spacing:0.010px;left:779.89px;width:1200px;text-align:center;">17:48:30</div>
<div class="t" style="top:1018.00px;height:14px;line-height:14px;font-size:10.5px;color:#263626;letter-spacing:0.010px;left:871.51px;width:1200px;text-align:center;">17:49:00</div>
<div class="t" style="top:1018.00px;height:14px;line-height:14px;font-size:10.5px;color:#263626;letter-spacing:0.010px;left:963.13px;width:1200px;text-align:center;">17:49:30</div>
<div class="t" style="top:1018.00px;height:14px;line-height:14px;font-size:10.5px;color:#263626;letter-spacing:0.010px;left:1054.75px;width:1200px;text-align:center;">17:50:00</div>
<div class="t" style="top:1018.00px;height:14px;line-height:14px;font-size:10.5px;color:#263626;letter-spacing:0.010px;left:1146.37px;width:1200px;text-align:center;">17:50:30</div>
<div class="t" style="top:1018.00px;height:14px;line-height:14px;font-size:10.5px;color:#263626;letter-spacing:0.010px;left:1237.99px;width:1200px;text-align:center;">17:51:00</div>
<div class="t" style="top:1003.50px;height:15px;line-height:15px;font-size:11px;color:#333;left:-572.00px;width:600px;text-align:right;">0</div>
<div class="t" style="top:615.50px;height:15px;line-height:15px;font-size:11px;color:#333;left:-572.00px;width:600px;text-align:right;">450</div>
<div class="t" style="top:593.50px;height:15px;line-height:15px;font-size:11px;color:#a00000;left:-572.00px;width:600px;text-align:right;">35</div>
<div class="t" style="top:617.50px;height:15px;line-height:15px;font-size:11px;color:#d00000;left:1865.00px;">30</div>
<div class="t" style="top:592.00px;height:10px;line-height:10px;font-size:9px;color:#8a1515;left:347.00px;width:1200px;text-align:center;">Jitter (ms)</div>
<div class="t" style="left:-6px;top:813px;width:60px;height:16px;line-height:16px;font-size:11px;color:#4a4a5a;text-align:center;transform:rotate(-90deg);letter-spacing:-0.2px;">Latency (ms)</div>
<div class="t" style="left:1836px;top:819px;width:70px;height:16px;line-height:16px;font-size:11px;color:#d0102a;text-align:center;transform:rotate(90deg);letter-spacing:-0.44px;">Packet Loss %</div>
<svg style="left:0;top:0" width="1920" height="1040" viewBox="0 0 1920 1040">
<rect x="1.5" y="69.5" width="1892" height="969" fill="none" stroke="#fafafa" stroke-width="1"/><rect x="1.5" y="69.5" width="1892" height="969" fill="none" stroke="#505050" stroke-width="1" stroke-dasharray="2,1" shape-rendering="crispEdges"/>
</svg>
<div class="r" style="left:0px;top:1040px;width:1920px;height:40px;background:#101010;"></div>
<svg style="left:0;top:1040px" width="1920" height="40" viewBox="0 0 1920 40">
<path d="M16 12.6L23.2 12.2V19.4H16Z M24.2 12.1L32 11.7V19.4H24.2Z M16 20.5H23.2V27.4L16 26.6Z M24.2 20.5H32V28.2L24.2 27.5Z" fill="#fff"/>
<circle cx="74.5" cy="17.5" r="5.3" fill="none" stroke="#fff" stroke-width="1.2"/>
<path d="M70.8 21.3L64 28" stroke="#fff" stroke-width="1.3"/>
<path d="M112.5 12V13.5H122.5V12 M112.5 28V26.5H122.5V28" fill="none" stroke="#fff" stroke-width="1"/>
<rect x="112.5" y="16.5" width="10" height="7" fill="none" stroke="#fff" stroke-width="1"/>
<rect x="126" y="12" width="1.1" height="16" fill="#fff"/><rect x="125" y="17" width="3" height="3" fill="#fff"/>
<path d="M160.5 11H168L169.5 12.5H181.5V28.5H160.5Z" fill="#f5c94a"/>
<rect x="160.5" y="13.5" width="21" height="15" fill="#fde49c"/>
<rect x="161.5" y="11.5" width="6" height="1.2" fill="#6ab8e8"/>
<path d="M164 30V22.5Q164 21 165.5 21H176Q177.5 21 177.5 22.5V30H173.5V25.5H168V30Z" fill="#3aaee8"/>
<rect x="245" y="0" width="48" height="40" fill="#9a5119"/>
<rect x="245" y="38" width="48" height="2" fill="#ff8a00"/>
<defs><linearGradient id="vg" x1="0" y1="0" x2="0.4" y2="1"><stop offset="0" stop-color="#8cc4f0"/><stop offset="0.45" stop-color="#5a80cc"/><stop offset="1" stop-color="#3d5cb8"/></linearGradient>
<linearGradient id="pg" x1="0" y1="0" x2="0" y2="1"><stop offset="0" stop-color="#22a6e6"/><stop offset="1" stop-color="#0b76bf"/></linearGradient></defs>
<rect x="257" y="8" width="24" height="24" fill="url(#vg)"/>
<filter id="bl" x="-50%" y="-50%" width="200%" height="200%"><feGaussianBlur stdDeviation="1.2"/></filter><clipPath id="vc"><rect x="257" y="8" width="24" height="24"/></clipPath><g clip-path="url(#vc)"><path d="M273 8H282V25Z" fill="#d8a0d8" opacity="0.75" filter="url(#bl)"/><path d="M276 9L281 17" stroke="#f0c0e8" stroke-width="1" opacity="0.8"/></g>
<path d="M263.2 11L269 27.5L274.8 11" fill="none" stroke="#eefaff" stroke-width="1.6"/>
<rect x="294" y="0" width="48" height="40" fill="#333333"/>
<rect x="294" y="38" width="48" height="2" fill="#76b9ed"/>
<rect x="306" y="8" width="24" height="24" rx="4" fill="url(#pg)"/>
<path d="M306 12H314.8L314 14H306Z" fill="#ff5a1f"/><path d="M306 15.2H313.6L312.8 17.6H306Z" fill="#ffd000"/><path d="M306 18.6H312.3L311.5 21H306Z" fill="#6cc04a"/>
<circle cx="322.2" cy="16.6" r="4.9" fill="#fff"/>
<path d="M310.5 32L315.5 22.5Q319.5 25.5 326.5 25Q323 29 318.5 28.2L316.5 32Z" fill="#fff"/>
<circle cx="220.0" cy="20.0" r="11.0" fill="#ffcd40"/>
<path d="M229.90 15.20L220.00 15.20L220.0 20.0L215.84 22.40L210.89 13.83A11.0 11.0 0 0 1 229.90 15.20Z" fill="#e0503f"/>
<path d="M210.89 13.83L215.84 22.40L220.0 20.0L224.16 22.40L219.21 30.97A11.0 11.0 0 0 1 210.89 13.83Z" fill="#1a9f5a"/>
<circle cx="220.0" cy="20.0" r="4.8" fill="#f4f4f4"/><circle cx="220.0" cy="20.0" r="3.9" fill="#4a89f0"/>
<path d="M1735.3 22.6L1741 16.8L1746.7 22.6" fill="none" stroke="#fff" stroke-width="1.1"/>
<path d="M1762 14.7H1772.6V23H1760.4V20" fill="none" stroke="#fff" stroke-width="1.1"/>
<rect x="1757.6" y="14.6" width="4.4" height="5.2" fill="none" stroke="#fff" stroke-width="1.1"/>
<path d="M1758.8 17.2Q1759.8 18.6 1760.8 17.2" fill="none" stroke="#fff" stroke-width="0.9"/>
<path d="M1765.5 23V26.2M1762 26.6H1769M1759.4 20V27" stroke="#fff" stroke-width="1.1" fill="none"/>
<path d="M1781.3 17H1783.2L1786.6 14.2V25.6L1783.2 22.8H1781.3Z" fill="none" stroke="#fff" stroke-width="1.1"/>
<path d="M1789 17.6Q1790.6 20 1789 22.4 M1791.3 15.5Q1794.3 20 1791.3 24.8 M1793.7 13.2Q1798 20 1793.7 26.8" fill="none" stroke="#fff" stroke-width="1"/>
<path d="M1879.5 12.5H1894.5V24.5H1889.5L1887 27L1884.5 24.5H1879.5Z" fill="none" stroke="#fff" stroke-width="1.1"/>
<rect x="1915" y="0" width="1" height="40" fill="#6a6a6a"/>
</svg>
<div class="t" style="top:1042.50px;height:16px;line-height:16px;font-size:12px;color:#fff;letter-spacing:-0.863px;left:1232.87px;width:1200px;text-align:center;">17:51</div>
<div class="t" style="top:1060.70px;height:16px;line-height:16px;font-size:12px;color:#fff;letter-spacing:-0.455px;left:1233.77px;width:1200px;text-align:center;">25.11.2018</div>
</body></html>
